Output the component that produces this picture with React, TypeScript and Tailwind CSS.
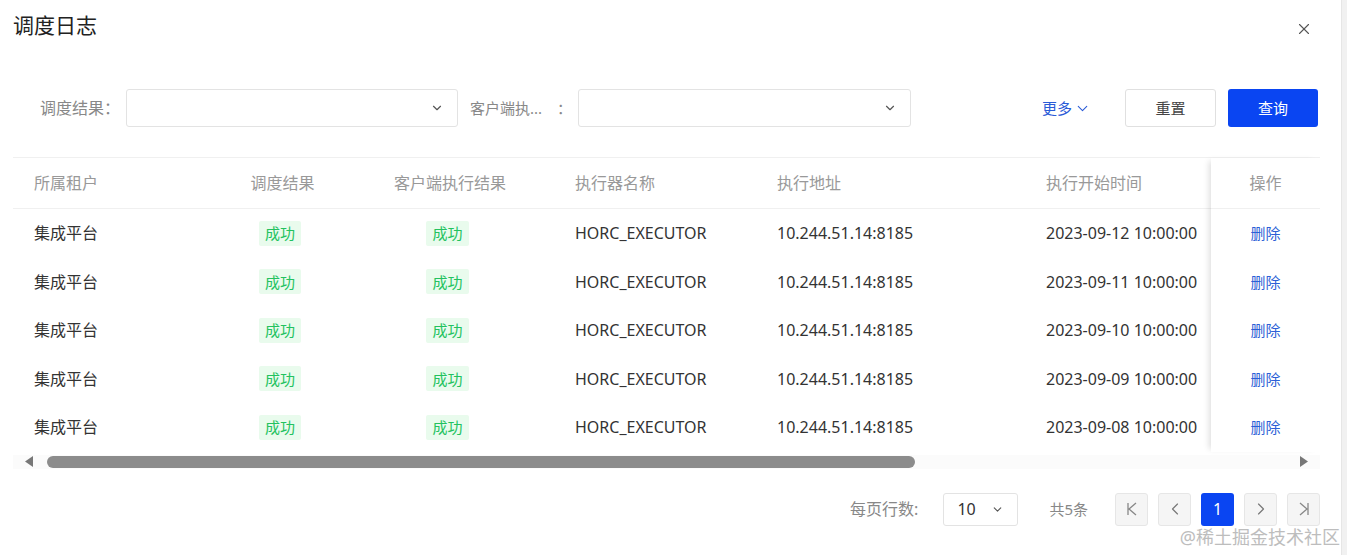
import { X, ChevronDown, ChevronLeft, ChevronRight } from 'lucide-react';

const ROWS = [
  '2023-09-12 10:00:00',
  '2023-09-11 10:00:00',
  '2023-09-10 10:00:00',
  '2023-09-09 10:00:00',
  '2023-09-08 10:00:00',
];

function Tag() {
  return (
    <span className="inline-flex h-[25px] items-center rounded-[2px] bg-[#e9fbed] px-[6px] text-[15px] text-[#23c25f]">
      成功
    </span>
  );
}

function Select({ width }: { width: string }) {
  return (
    <div className={`${width} flex h-[38px] items-center justify-end rounded-[3px] border border-[#e3e3e3] bg-white pr-[13px]`}>
      <ChevronDown size={14} strokeWidth={2} className="text-[#555]" />
    </div>
  );
}

function PageBtn({ children, active }: { children: React.ReactNode; active?: boolean }) {
  return (
    <div
      className={
        active
          ? 'flex h-[33px] w-[33px] items-center justify-center rounded-[3px] bg-[#0a45f2] text-[16px] text-white'
          : 'flex h-[33px] w-[33px] items-center justify-center rounded-[3px] border border-[#e6e6e6] bg-[#f5f5f5] text-[#777]'
      }
    >
      {children}
    </div>
  );
}

export default function App() {
  return (
    <div className="flex h-[555px] w-full font-['Noto_Sans','Noto_Sans_CJK_SC',sans-serif] text-[#333]">
      <div className="relative flex w-[1341px] flex-col bg-white pl-[13px] pr-[21px]">
        {/* Header */}
        <div className="flex h-[52px] items-center justify-between">
          <h1 className="text-[21px] font-normal text-[#222]">调度日志</h1>
          <X size={18} strokeWidth={1.5} className="mr-[7px] mt-[5px] text-[#555]" />
        </div>

        {/* Filters */}
        <div className="mt-[37px] flex h-[38px] items-center pr-[2px]">
          <div className="w-[113px] pr-[6px] text-right text-[16px] text-[#888]">调度结果：</div>
          <Select width="w-[332px]" />
          <div className="flex w-[120px] items-center justify-between pl-[12px] pr-[6px] text-[15px] text-[#888]">
            <span>客户端执...</span>
            <span>：</span>
          </div>
          <Select width="w-[333px]" />
          <div className="flex-1" />
          <div className="flex items-center gap-[2px] text-[15px] text-[#2a5bd7]">
            更多
            <ChevronDown size={17} strokeWidth={1.5} />
          </div>
          <button className="ml-[34px] h-[38px] w-[91px] rounded-[3px] border border-[#e0e0e0] bg-white text-[15px] text-[#444]">
            重置
          </button>
          <button className="ml-[12px] h-[38px] w-[90px] rounded-[3px] bg-[#0a45f2] text-[15px] text-white">
            查询
          </button>
        </div>

        {/* Table */}
        <div className="mt-[30px] flex border-t border-[#f0f0f0]">
          <div className="flex-1">
            <div className="flex h-[51px] items-center border-b border-[#f0f0f0] text-[16px] text-[#999]">
              <div className="w-[202px] pl-[21px]">所属租户</div>
              <div className="w-[135px] text-center">调度结果</div>
              <div className="w-[200px] text-center">客户端执行结果</div>
              <div className="w-[205px] pl-[25px]">执行器名称</div>
              <div className="w-[270px] pl-[22px]">执行地址</div>
              <div className="flex-1 pl-[21px]">执行开始时间</div>
            </div>
            {ROWS.map((time) => (
              <div key={time} className="flex h-[48.5px] items-center text-[16px]">
                <div className="w-[202px] pl-[21px]">集成平台</div>
                <div className="flex w-[130px] justify-center">
                  <Tag />
                </div>
                <div className="flex w-[205px] justify-center">
                  <Tag />
                </div>
                <div className="w-[205px] pl-[25px]">HORC_EXECUTOR</div>
                <div className="w-[270px] pl-[22px]">10.244.51.14:8185</div>
                <div className="flex-1 pl-[21px]">{time}</div>
              </div>
            ))}
          </div>
          <div className="relative w-[109px] bg-white shadow-[-5px_0_6px_-3px_rgba(0,0,0,0.13)]">
            <div className="flex h-[51px] items-center justify-center border-b border-[#f0f0f0] text-[16px] text-[#999]">
              操作
            </div>
            {ROWS.map((time) => (
              <div key={time} className="flex h-[48.5px] items-center justify-center text-[15px] text-[#2c5fd6]">
                删除
              </div>
            ))}
          </div>
        </div>

        {/* Horizontal scrollbar */}
        <div className="mt-[3px] flex h-[14px] items-center bg-[#fbfbfb]">
          <svg width="9" height="11" viewBox="0 0 9 11" className="ml-[12px]">
            <path d="M8 0 L0 5.5 L8 11 Z" fill="#777" />
          </svg>
          <div className="ml-[13px] h-[12px] w-[868px] rounded-full bg-[#8c8c8c]" />
          <div className="flex-1" />
          <svg width="9" height="11" viewBox="0 0 9 11" className="mr-[12px]">
            <path d="M1 0 L9 5.5 L1 11 Z" fill="#777" />
          </svg>
        </div>

        {/* Pagination */}
        <div className="mt-[24px] flex h-[33px] items-center justify-end text-[16px] text-[#888]">
          <span>每页行数:</span>
          <div className="ml-[25px] flex h-[33px] w-[75px] items-center justify-between rounded-[3px] border border-[#e3e3e3] pl-[13px] pr-[13px] text-[16px] text-[#333]">
            10
            <ChevronDown size={13} strokeWidth={2} className="text-[#555]" />
          </div>
          <span className="ml-[31px] text-[15px]">共5条</span>
          <div className="ml-[27px] flex gap-[10px]">
            <PageBtn>
              <svg width="14" height="16" viewBox="0 0 14 16" fill="none" stroke="#888" strokeWidth="1.3">
                <path d="M3 2 V14 M11 2 L4 8 L11 14" />
              </svg>
            </PageBtn>
            <PageBtn>
              <ChevronLeft size={20} strokeWidth={1.4} />
            </PageBtn>
            <PageBtn active>1</PageBtn>
            <PageBtn>
              <ChevronRight size={20} strokeWidth={1.4} />
            </PageBtn>
            <PageBtn>
              <svg width="14" height="16" viewBox="0 0 14 16" fill="none" stroke="#888" strokeWidth="1.3">
                <path d="M11 2 V14 M3 2 L10 8 L3 14" />
              </svg>
            </PageBtn>
          </div>
        </div>

        <div className="pointer-events-none absolute bottom-[4px] right-[1px] text-[18px] text-[#bdbdbd]">
          @稀土掘金技术社区
        </div>
      </div>
      <div className="flex-1 border-l border-[#e6e6e6] bg-[#f1f1f1]" />
    </div>
  );
}
